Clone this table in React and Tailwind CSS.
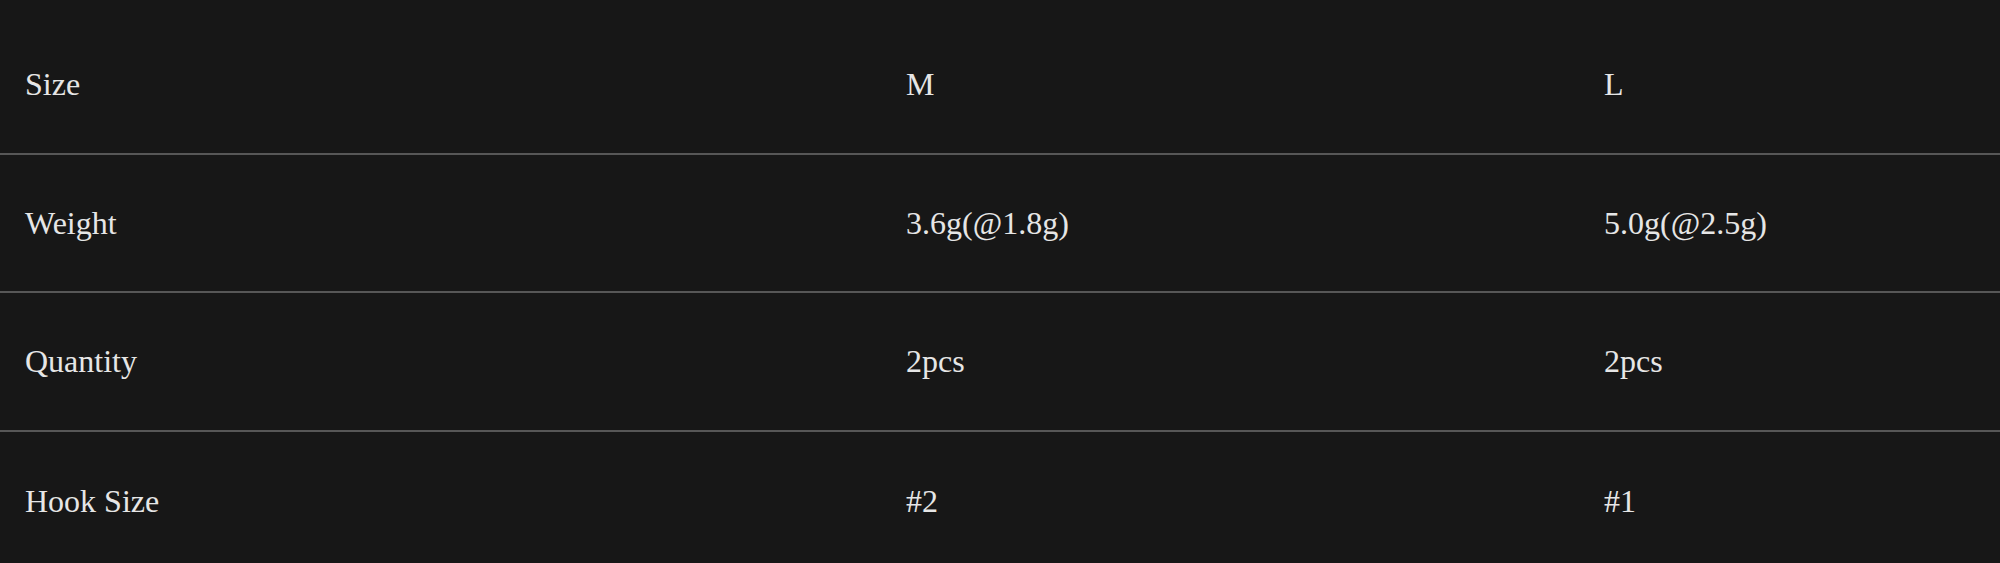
import React from 'react';

const rows = [
    { label: 'Size', m: 'M', l: 'L' },
    { label: 'Weight', m: '3.6g(@1.8g)', l: '5.0g(@2.5g)' },
    { label: 'Quantity', m: '2pcs', l: '2pcs' },
    { label: 'Hook Size', m: '#2', l: '#1' },
];

export default function App() {
    return (
        <div className="w-full h-[563px] overflow-hidden bg-[#171717] pt-[16px] text-[32px] text-[#e6e6e6]" style={{ fontFamily: '"Liberation Serif", "Times New Roman", serif' }}>
            {rows.map((row, idx) => (
                <div key={row.label} className={`grid grid-cols-[881px_698px_1fr] h-[138.5px] items-center ${idx < rows.length - 1 ? 'border-b-2 border-[#575757]' : ''}`}>
                    <div className="pl-[25px]">{row.label}</div>
                    <div className="pl-[25px]">{row.m}</div>
                    <div className="pl-[25px]">{row.l}</div>
                </div>
            ))}
        </div>
    );
}
